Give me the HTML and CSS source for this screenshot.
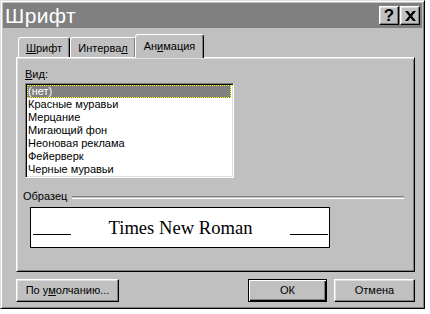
FILE: index.html
```html
<!DOCTYPE html>
<html lang="ru">
<head>
<meta charset="utf-8">
<link rel="stylesheet" href="styles.css">
</head>
<body>
<div class="window">
  <div class="titlebar">
    <span class="title">Шрифт</span>
    <div class="tbtns">
      <div class="tbtn help">?</div>
      <div class="tbtn close">
        <svg width="11" height="10" viewBox="0 0 11 10"><path d="M0 0h3l2.5 3.3L8 0h3L7 5l4 5H8L5.5 6.7 3 10H0l4-5z" fill="#000"/></svg>
      </div>
    </div>
  </div>
  <div class="body">
    <div class="tabs">
      <div class="tab t1"><u>Ш</u>рифт</div>
      <div class="tab t2">Интерва<u>л</u></div>
      <div class="tab t3 active">Ан<u>и</u>мация</div>
    </div>
    <div class="panel">
      <div class="label"><u>В</u>ид:</div>
      <div class="listbox">
        <div class="item sel"><span class="focus">(нет)</span></div>
        <div class="item">Красные муравьи</div>
        <div class="item">Мерцание</div>
        <div class="item">Мигающий фон</div>
        <div class="item">Неоновая реклама</div>
        <div class="item">Фейерверк</div>
        <div class="item">Черные муравьи</div>
      </div>
      <div class="group">
        <span class="glabel">Образец</span>
        <span class="gline"></span>
      </div>
      <div class="preview">
        <span class="rule"></span>
        <span class="sample">Times New Roman</span>
        <span class="rule"></span>
      </div>
    </div>
    <div class="buttons">
      <div class="btn def-btn">По у<u>м</u>олчанию...</div>
      <div class="spacer"></div>
      <div class="btn ok">ОК</div>
      <div class="btn cancel">Отмена</div>
    </div>
  </div>
</div>
</body>
</html>
```
FILE: styles.css
```css
html, body {
  margin: 0;
  padding: 0;
  background: #ffffff;
}
body {
  font-family: "Liberation Sans", Arial, sans-serif;
  font-size: 11px;
  color: #000;
}
.window {
  width: 425px;
  height: 309px;
  box-sizing: border-box;
  background: #c0c0c0;
  border-top: 1px solid #dfdfdf;
  border-left: 1px solid #dfdfdf;
  border-right: 1px solid #000;
  border-bottom: 1px solid #000;
  box-shadow: inset 1px 1px #fff, inset -1px -1px #808080;
  padding: 2px;
  display: flex;
  flex-direction: column;
}
.titlebar {
  height: 25px;
  background: #808080;
  color: #fff;
  display: flex;
  align-items: center;
  justify-content: space-between;
  padding-left: 2px;
}
.title {
  font-size: 21px;
  line-height: 25px;
  letter-spacing: 0.4px;
}
.tbtns {
  display: flex;
  gap: 1px;
  margin-right: 2px;
}
.tbtn {
  width: 20px;
  height: 19px;
  box-sizing: border-box;
  background: #c0c0c0;
  border-top: 1px solid #fff;
  border-left: 1px solid #fff;
  border-right: 1px solid #000;
  border-bottom: 1px solid #000;
  box-shadow: inset -1px -1px #808080, inset 1px 1px #dfdfdf;
  display: flex;
  align-items: center;
  justify-content: center;
  color: #000;
}
.help {
  font-weight: bold;
  font-size: 17px;
  line-height: 17px;
}
.body {
  margin: 5px 0 0 13px;
  width: 399px;
  display: flex;
  flex-direction: column;
}
.tabs {
  display: flex;
  align-items: flex-end;
  height: 24px;
  padding-left: 2px;
  position: relative;
  z-index: 1;
}
.tab {
  box-sizing: border-box;
  height: 20px;
  background: #c0c0c0;
  border-top: 1px solid #fff;
  border-left: 1px solid #fff;
  border-right: 1px solid #000;
  border-top-left-radius: 3px;
  border-top-right-radius: 3px;
  box-shadow: inset -1px 0 #808080;
  padding-top: 4px;
  text-align: center;
  line-height: 13px;
}
.t1 { width: 52px; }
.t2 { width: 66px; }
.t3 { width: 69px; }
.tab.active {
  height: 24px;
  margin-bottom: -1px;
  padding-top: 5px;
  margin-left: -1px;
}
.panel {
  height: 215px;
  box-sizing: border-box;
  border-top: 1px solid #fff;
  border-left: 1px solid #fff;
  border-right: 1px solid #000;
  border-bottom: 1px solid #000;
  box-shadow: inset 1px 1px #dfdfdf, inset -1px -1px #808080;
  padding: 10px 0 0 8px;
  display: flex;
  flex-direction: column;
}
.label {
  line-height: 13px;
  height: 13px;
}
.listbox {
  margin-top: 2px;
  width: 209px;
  height: 95px;
  box-sizing: border-box;
  background: #fff;
  border-top: 1px solid #808080;
  border-left: 1px solid #808080;
  border-right: 1px solid #fff;
  border-bottom: 1px solid #fff;
  box-shadow: inset 1px 1px #000, inset -1px -1px #dfdfdf;
  padding: 1px;
}
.item {
  height: 13px;
  line-height: 13px;
  padding-left: 1px;
  white-space: nowrap;
}
.item.sel {
  background: #808080;
  color: #fff;
  padding: 0;
  margin-right: 1px;
}
.focus {
  display: block;
  height: 13px;
  box-sizing: border-box;
  outline: 1px dotted #ffff00;
  outline-offset: -1px;
  padding-left: 1px;
  line-height: 12px;
}
.group {
  margin-top: 12px;
  margin-left: -2px;
  display: flex;
  align-items: center;
  height: 13px;
  line-height: 13px;
}
.gline {
  flex: 0 0 332px;
  margin-left: 5px;
  height: 1px;
  border-top: 1px solid #808080;
  border-bottom: 1px solid #fff;
  margin-top: 1px;
}
.preview {
  margin-top: 4px;
  margin-left: 5px;
  width: 300px;
  height: 41px;
  box-sizing: border-box;
  background: #fff;
  border: 1px solid #000;
  display: flex;
  align-items: center;
  padding: 0 1px 0 2px;
}
.rule {
  width: 38px;
  height: 13px;
  border-bottom: 1px solid #000;
}
.sample {
  flex: 1;
  text-align: center;
  font-family: "Liberation Serif", "Times New Roman", serif;
  font-size: 18.6px;
  line-height: 20px;
}
.buttons {
  margin-top: 7px;
  display: flex;
  height: 23px;
}
.spacer { flex: 1; }
.btn {
  box-sizing: border-box;
  height: 23px;
  background: #c0c0c0;
  border-top: 1px solid #fff;
  border-left: 1px solid #fff;
  border-right: 1px solid #000;
  border-bottom: 1px solid #000;
  box-shadow: inset -1px -1px #808080, inset 1px 1px #dfdfdf;
  display: flex;
  align-items: center;
  justify-content: center;
  line-height: 13px;
}
.def-btn { width: 103px; }
.ok {
  width: 79px;
  border: 1px solid #000;
  box-shadow: inset 1px 1px #fff, inset -1px -1px #000, inset -2px -2px #808080;
}
.cancel {
  width: 81px;
  margin-left: 7px;
}
u { text-decoration: underline; text-underline-offset: 1px; }
```
